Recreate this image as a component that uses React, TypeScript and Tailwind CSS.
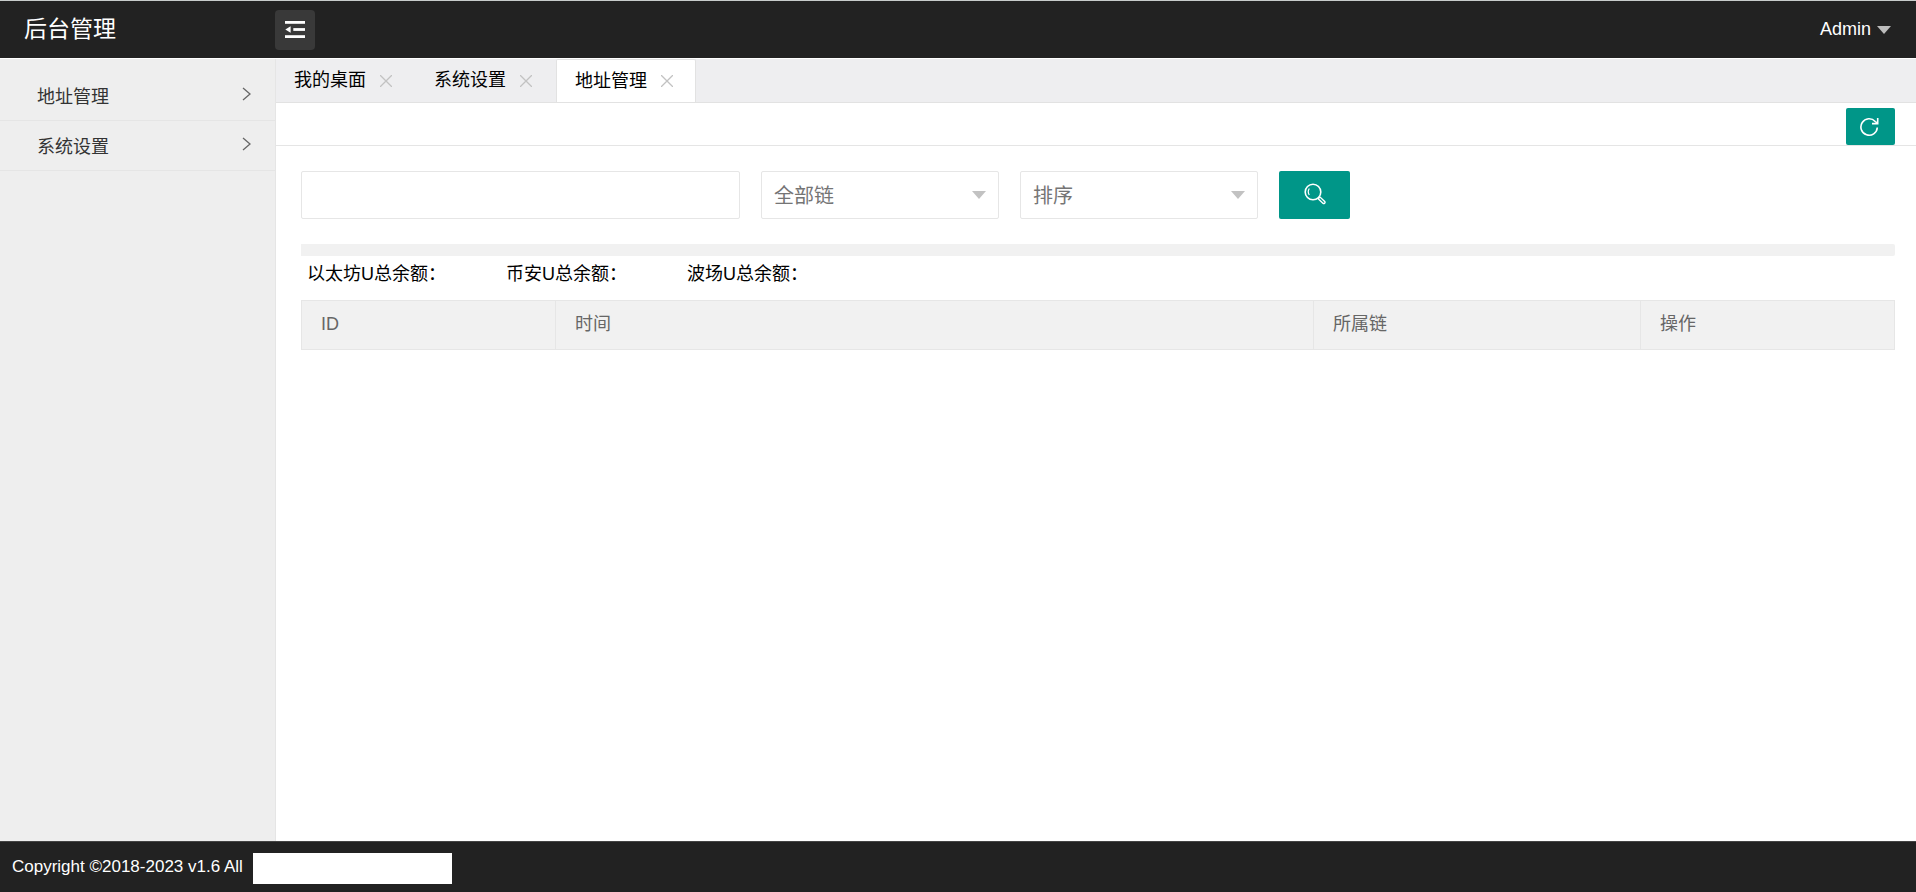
import React, { useState } from 'react';

const FONT = "font-['Liberation_Sans','Noto_Sans_CJK_SC',sans-serif]";

const menus = ['地址管理', '系统设置'];
const tabNames = ['我的桌面', '系统设置', '地址管理'];
const totals = ['以太坊U总余额：', '币安U总余额：', '波场U总余额：'];

const columns = [
  { label: 'ID', width: 'w-[254px]' },
  { label: '时间', width: 'w-auto' },
  { label: '所属链', width: 'w-[327px]' },
  { label: '操作', width: 'w-[254px]' },
];

const FoldIcon = () => (
  <svg width="20" height="17" viewBox="0 0 20 17" fill="currentColor" aria-hidden="true">
    <rect x="0" y="0" width="20" height="2.8" />
    <rect x="8.3" y="7.1" width="11.7" height="2.8" />
    <rect x="0" y="14.2" width="20" height="2.8" />
    <path d="M5.6 5.2v6.6L.3 8.5z" />
  </svg>
);

const RefreshIcon = () => (
  <svg width="20" height="20" viewBox="0 0 20 20" fill="none" stroke="currentColor" strokeWidth="1.6" aria-hidden="true">
    <path d="M17.3 10.5A8.2 8.2 0 1 1 15.2 4.5L17.3 6.2" />
    <path d="M17.7 1v5.6H12" />
  </svg>
);

const SearchIcon = () => (
  <svg width="22" height="22" viewBox="0 0 22 22" fill="none" stroke="currentColor" aria-hidden="true">
    <circle cx="9" cy="9" r="7.8" strokeWidth="1.6" />
    <path d="M5.3 5.5c-1.3 2-1.3 4.5 0 6.5" strokeWidth="1.2" />
    <path d="M14.2 15.8l1.9-1.7 4.6 4.3c1 1.3-.6 2.8-1.8 1.8z" strokeWidth="1.4" />
  </svg>
);

const Caret = ({ className }: { className?: string }) => (
  <svg width="14" height="8" viewBox="0 0 14 8" fill="currentColor" className={className} aria-hidden="true">
    <path d="M0 0h14L7 8z" />
  </svg>
);

const FilterSelect = ({ label, options }: { label: string; options: string[] }) => (
  <div className="relative w-[238px] shrink-0 text-[#c2c2c2]">
    <select
      aria-label={label}
      defaultValue=""
      className="h-12 w-full appearance-none rounded-xs border border-[#e6e6e6] bg-white pl-3 pr-10 pt-0.5 text-xl text-[#757575] outline-none"
    >
      <option value="">{label}</option>
      {options.map((o) => (
        <option key={o}>{o}</option>
      ))}
    </select>
    <Caret className="pointer-events-none absolute right-[13px] top-5" />
  </div>
);

const Header = ({ onToggle }: { onToggle: () => void }) => (
  <header className="flex h-[59px] items-center border-b border-t border-b-white border-t-[#c8cccb] bg-[#222] pr-[25px] text-white">
    <h1 className="w-[275px] shrink-0 pb-0.5 pl-6 text-[23px] leading-8">后台管理</h1>
    <button
      type="button"
      aria-label="展开左侧栏"
      onClick={onToggle}
      className="flex size-10 items-center justify-center rounded-sm bg-[#393939]"
    >
      <FoldIcon />
    </button>
    <button type="button" className="ml-auto flex items-center gap-1.5 text-[18px]">
      Admin
      <Caret className="text-[#bcbcbc]" />
    </button>
  </header>
);

const Sidebar = () => (
  <nav className="w-[276px] shrink-0 border-r border-[#e5e5e5] bg-[#eee] pt-3">
    {menus.map((m) => (
      <a
        key={m}
        href="#"
        className="flex h-[50px] items-center justify-between border-b border-[#e5e5e5] pl-[37px] pr-[23px] text-[18px] text-[#333]"
      >
        <span className="pt-1">{m}</span>
        <svg width="10" height="14" viewBox="0 0 10 14" fill="none" stroke="#666" strokeWidth="1.3" className="mb-1" aria-hidden="true">
          <path d="M1 1l7 6-7 6" />
        </svg>
      </a>
    ))}
  </nav>
);

const App: React.FC = () => {
  const [open, setOpen] = useState(true);
  const [active, setActive] = useState(2);

  return (
    <div className={`flex min-h-screen flex-col bg-white text-black ${FONT}`}>
      <Header onToggle={() => setOpen(!open)} />

      <div className="flex grow">
        {open && <Sidebar />}

        <main className="min-w-0 grow">
          <div className="flex h-11 border-b border-[#e2e2e2] bg-[#eeeef0]">
            {tabNames.map((name, i) => (
              <div
                key={name}
                className={
                  i === active
                    ? 'flex w-[140px] items-center gap-3.5 rounded-t-xs border-x border-t border-[#e2e2e2] bg-white pl-[18px]'
                    : 'flex w-[140px] items-center gap-3.5 pl-[18px]'
                }
              >
                <button type="button" onClick={() => setActive(i)} className="text-[18px]">
                  {name}
                </button>
                <button type="button" aria-label={`关闭${name}`}>
                  <svg width="12" height="12" viewBox="0 0 12 12" stroke="#c2c2c2" strokeWidth="1.3" aria-hidden="true">
                    <path d="M0 0l12 12M12 0L0 12" />
                  </svg>
                </button>
              </div>
            ))}
          </div>

          <div className="flex h-[43px] items-end justify-end border-b border-[#e5e5e5] pr-[21px]">
            <button
              type="button"
              aria-label="刷新"
              className="flex h-[37px] w-[49px] items-center justify-center rounded-xs bg-[#009688] pr-0.5 text-white"
            >
              <RefreshIcon />
            </button>
          </div>

          <div className="px-[25px] pr-[21px] pt-[25px]">
            <form className="flex gap-[21px]" onSubmit={(e) => e.preventDefault()}>
              <input
                type="text"
                aria-label="地址"
                className="h-12 w-[439px] rounded-xs border border-[#e6e6e6] px-3 text-xl outline-none"
              />
              <FilterSelect label="全部链" options={['以太坊', '币安', '波场']} />
              <FilterSelect label="排序" options={['ID', '时间']} />
              <button
                type="submit"
                aria-label="搜索"
                className="flex h-12 w-[71px] items-center justify-center rounded-xs bg-[#009688] pb-0.5 text-white"
              >
                <SearchIcon />
              </button>
            </form>

            <div className="mt-[25px] h-3 rounded-r-xs bg-[#f1f1f1]" />

            <div className="flex h-11 gap-[60px] pl-1.5 pt-1.5 text-[18px] leading-6">
              {totals.map((t) => (
                <span key={t}>{t}</span>
              ))}
            </div>

            <table className="w-full table-fixed border-collapse text-[18px] text-[#666]">
              <thead>
                <tr className="h-[49px] bg-[#f1f1f1]">
                  {columns.map((c) => (
                    <th
                      key={c.label}
                      className={`${c.width} border border-[#e6e6e6] px-[19px] pb-0.5 text-left font-normal`}
                    >
                      {c.label}
                    </th>
                  ))}
                </tr>
              </thead>
              <tbody />
            </table>
          </div>
        </main>
      </div>

      <footer className="flex h-[51px] items-center gap-2.5 border-t border-[#444] bg-[#222] pl-3 text-[17px] text-white">
        <span>Copyright ©2018-2023 v1.6 All</span>
        <span className="mt-0.5 h-[31px] w-[199px] bg-white" />
      </footer>
    </div>
  );
};

export default App;
